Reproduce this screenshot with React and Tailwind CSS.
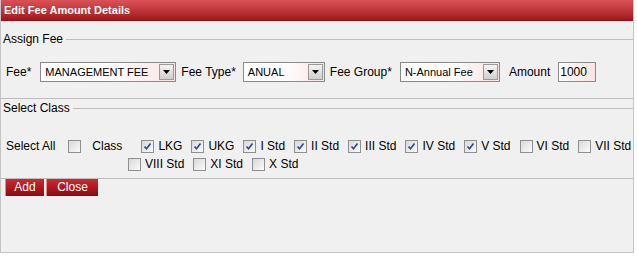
import React from 'react'

function Check({ on }) {
  return (
    <span className="inline-flex w-[13px] h-[13px] shrink-0 items-center justify-center border border-[#8f8f8f] bg-gradient-to-br from-[#d8d8d8] to-[#fbfbfb]">
      {on && (
        <svg width="9" height="9" viewBox="0 0 9 9">
          <path d="M1.5 4.5 L3.5 6.8 L7.5 1.5" fill="none" stroke="#2d4590" strokeWidth="1.6" />
        </svg>
      )}
    </span>
  )
}

function Select({ value, width }) {
  return (
    <div
      className="flex h-[20px] border border-[#8a8a8a] bg-gradient-to-r from-white via-white to-[#fbe3e3]"
      style={{ width }}
    >
      <span className="flex-1 pl-[4px] leading-[18px] text-[11px] text-black overflow-hidden whitespace-nowrap">{value}</span>
      <span className="m-[1px] flex w-[15px] items-center justify-center border border-[#9a9a9a] bg-gradient-to-b from-[#f4f4f4] to-[#cfcfcf]">
        <svg width="7" height="4" viewBox="0 0 7 4">
          <path d="M0 0 H7 L3.5 4 Z" fill="#000" />
        </svg>
      </span>
    </div>
  )
}

function Legend({ label }) {
  return (
    <div className="flex items-center h-[14px]">
      <span className="pl-[2px] pr-[3px] text-[12px] text-black">{label}</span>
      <div className="flex-1 border-t border-[#bdbdbd]" />
    </div>
  )
}

function Item({ label, on, first }) {
  return (
    <div className={`flex items-center ${first ? '' : 'ml-[9px]'}`}>
      <Check on={on} />
      <span className="ml-[4px]">{label}</span>
    </div>
  )
}

export default function App() {
  const row1 = [
    { label: 'LKG', on: true },
    { label: 'UKG', on: true },
    { label: 'I Std', on: true },
    { label: 'II Std', on: true },
    { label: 'III Std', on: true },
    { label: 'IV Std', on: true },
    { label: 'V Std', on: true },
    { label: 'VI Std', on: false },
    { label: 'VII Std', on: false }
  ]
  const row2 = [
    { label: 'VIII Std', on: false },
    { label: 'XI Std', on: false },
    { label: 'X Std', on: false }
  ]

  return (
    <div className="w-[637px] h-[256px] bg-white font-['Liberation_Sans',Arial,sans-serif] text-[12px] text-black">
      <div className="w-[634px] h-[253px] flex flex-col bg-[#f0f0f0] border-r border-b border-l border-[#c4c4c4]">
        {/* Header */}
        <div className="h-[21px] flex items-center pl-[3px] border-b border-[#8c1014] bg-gradient-to-b from-[#da5258] to-[#a3161c]">
          <span className="text-[11px] font-bold text-white">Edit Fee Amount Details</span>
        </div>

        {/* Assign Fee */}
        <div className="mt-[11px]">
          <Legend label="Assign Fee" />
        </div>
        <div className="mt-[16px] flex items-center pl-[5px]">
          <span>Fee*</span>
          <div className="ml-[9px]"><Select value="MANAGEMENT FEE" width={136} /></div>
          <span className="ml-[5px]">Fee Type*</span>
          <div className="ml-[7px]"><Select value="ANUAL" width={82} /></div>
          <span className="ml-[5px]">Fee Group*</span>
          <div className="ml-[8px]"><Select value="N-Annual Fee" width={100} /></div>
          <span className="ml-[9px]">Amount</span>
          <div className="ml-[8px] h-[20px] w-[38px] border border-[#8a8a8a] bg-gradient-to-r from-white to-[#fbe3e3] pl-[1px] leading-[18px] text-[12px]">1000</div>
        </div>
        <div className="mt-[16px] border-t border-[#bdbdbd]" />

        {/* Select Class */}
        <div className="mt-[2px]">
          <Legend label="Select Class" />
        </div>
        <div className="mt-[24px] flex items-center pl-[5px] h-[14px]">
          <span>Select All</span>
          <div className="ml-[13px] flex items-center"><Check on={false} /></div>
          <span className="ml-[11px]">Class</span>
          <div className="ml-[19px] flex items-center">
            {row1.map((it, i) => (
              <Item key={it.label} label={it.label} on={it.on} first={i === 0} />
            ))}
          </div>
        </div>
        <div className="mt-[4px] flex items-center pl-[127px] h-[14px]">
          {row2.map((it, i) => (
            <Item key={it.label} label={it.label} on={it.on} first={i === 0} />
          ))}
        </div>
        <div className="mt-[7px] border-t border-[#bdbdbd]" />

        {/* Buttons */}
        <div className="flex pl-[4px] gap-[2px]">
          <button className="h-[17px] w-[39px] border-l border-[#e58a8a] bg-gradient-to-b from-[#cc2a30] to-[#8c0a0e] text-[12px] text-white leading-[17px]">Add</button>
          <button className="h-[17px] w-[52px] border-l border-[#e58a8a] bg-gradient-to-b from-[#cc2a30] to-[#8c0a0e] text-[12px] text-white leading-[17px]">Close</button>
        </div>
      </div>
    </div>
  )
}
